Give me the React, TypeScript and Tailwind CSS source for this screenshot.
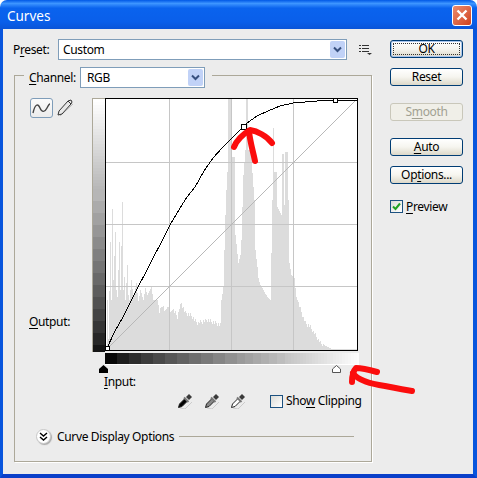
import React from "react";

const keypoints: [number, number][] = [
  [106,349],[107,300],[108,340],[110,242],[111,300],[112,209],[113,280],[115,232],[116,290],[117,297],[119,242],[120,290],[122,202],[123,290],[124,277],[125,300],[127,265],[128,295],[129,300],[131,280],[133,297],[136,283],[138,302],[140,290],[143,300],[145,288],[147,295],[151,287],[153,300],[157,300],[159,312],[162,305],[165,312],[167,305],[170,314],[172,308],[177,317],[179,308],[181,303],[185,313],[190,315],[197,323],[207,320],[215,323],[220,325],[221,300],[223,287],[224,250],[225,215],[226,190],[227,172],[228,99],[231,99],[232,157],[234,157],[235,235],[238,263],[240,255],[241,240],[242,207],[243,175],[245,150],[246,99],[247,99],[248,150],[251,150],[252,173],[254,200],[255,250],[257,267],[258,278],[260,285],[263,290],[267,297],[270,300],[271,253],[272,200],[273,128],[274,172],[276,172],[277,207],[281,215],[282,154],[283,154],[284,205],[285,152],[287,152],[288,200],[289,263],[291,275],[294,278],[296,297],[298,303],[301,312],[305,323],[310,327],[315,335],[320,343],[326,346],[332,349],[357,349],
];

function histPath() {
  let d = "";
  for (let x = 106; x < 357; x++) {
    let k = 0;
    while (k < keypoints.length - 2 && keypoints[k + 1][0] < x) k++;
    const [x0, y0] = keypoints[k];
    const [x1, y1] = keypoints[k + 1];
    let y = y0 + ((y1 - y0) * (x - x0)) / Math.max(1, x1 - x0);
    if (y > 300 && y < 345) y += ((x * 7) % 5) - 2;
    d += `M${x} ${Math.round(y)}V350H${x + 1}V${Math.round(y)}Z`;
  }
  return d;
}

const curve =
  "107,348 115,331 123,317 130,303 138,287 146,272 153,258 162,241 170,225 180,208 187,197 195,187 204,171 213,158 222,148 230,140 237,133 243,127 247,123 257,116 268,111 280,106 293,103 305,102 317,101 335,100 357,100";

const shade = (t: number) => {
  const v = Math.round(8 + 247 * Math.pow(Math.min(1, Math.max(0, t)), 0.8));
  return `rgb(${v},${v},${v})`;
};

function HorizontalRamp() {
  const cells: React.ReactNode[] = [];
  let x = 0;
  while (x < 254) {
    const w = x < 130 ? 12 : x < 180 ? 8 : 3;
    cells.push(<rect key={x} x={x} y={0} width={w} height={11} fill={shade(x / 254)} shapeRendering="crispEdges" />);
    x += w;
  }
  return <svg width={254} height={11} className="block">{cells}</svg>;
}

function VerticalRamp() {
  const cells: React.ReactNode[] = [];
  let y = 0;
  while (y < 253) {
    const h = y < 90 ? 3 : 12;
    cells.push(<rect key={y} x={0} y={y} width={12} height={h} fill={shade(1 - y / 253)} shapeRendering="crispEdges" />);
    y += h;
  }
  return <svg width={12} height={253} className="block">{cells}</svg>;
}

function Ul({ children }: { children: React.ReactNode }) {
  return <span className="underline underline-offset-2">{children}</span>;
}

function Chevron() {
  return (
    <div className="w-[15px] h-[17px] rounded-[2px] bg-[#c1d2f7] flex items-center justify-center shrink-0">
      <svg width="9" height="7" viewBox="0 0 9 7">
        <path d="M1 1.5 L4.5 5 L8 1.5" fill="none" stroke="#37507f" strokeWidth="2" />
      </svg>
    </div>
  );
}

function Btn({ children, mt, focus, disabled }: { children: React.ReactNode; mt: string; focus?: boolean; disabled?: boolean }) {
  const base = "w-[73px] h-[18px] rounded-[3px] border flex items-center justify-center " + mt;
  if (disabled) {
    return (
      <div className={base + " border-[#c9c7ba] bg-[#f0efe8] text-[#a1a192]"}>{children}</div>
    );
  }
  return (
    <div className={base + " border-[#003c74] bg-gradient-to-b from-[#ffffff] via-[#f6f5ef] to-[#dcd8c9] text-[#000] " + (focus ? "shadow-[inset_0_0_0_1px_#a9c6ee]" : "")}>
      {focus ? (
        <div className="w-[67px] h-[12px] border border-dotted border-[#333] flex items-center justify-center">{children}</div>
      ) : (
        children
      )}
    </div>
  );
}

function Dropper({ tip }: { tip: string }) {
  return (
    <svg width="16" height="16" viewBox="0 0 16 16" className="shrink-0">
      <path d="M3 15 L8 16 L15 9" fill="none" stroke="#ccc" strokeWidth="1" />
      <path d="M1.5 14.5 L2.5 11 L8 5.5 L10.5 8 L5 13.5 Z" fill={tip} stroke="#222" strokeWidth="1" />
      <path d="M7 4.5 L11.5 9" stroke="#777" strokeWidth="2" />
      <path d="M9 4 L12 1 L15 4 L12 7 Z" fill="#3a3a3a" />
    </svg>
  );
}

export default function App() {
  return (
    <div className="relative w-[477px] h-[478px] flex flex-col bg-white overflow-hidden font-['Noto_Sans','DejaVu_Sans',sans-serif] text-[12px] tracking-[-0.35px] leading-none text-black">
      <div className="h-[29px] shrink-0 rounded-t-[7px] flex items-center justify-between pl-[7px] pr-[5px] bg-[linear-gradient(180deg,#0058e6_0%,#3d95ff_12%,#0a63ee_28%,#0a5fea_75%,#0a55d8_100%)]">
        <span className="text-white text-[13.5px] tracking-normal mt-[5px]">Curves</span>
        <div className="w-[20px] h-[21px] mt-[1px] rounded-[3px] border border-white bg-gradient-to-br from-[#ec8b6c] to-[#cf3f1a] flex items-center justify-center">
          <svg width="12" height="12" viewBox="0 0 12 12">
            <path d="M1.5 1.5 L10.5 10.5 M10.5 1.5 L1.5 10.5" stroke="#fff" strokeWidth="2.4" />
          </svg>
        </div>
      </div>

      <div className="flex-1 flex bg-[#ececec] border-l-[3px] border-r-[4px] border-b-[4px] border-l-[#0855dd] border-r-[#0855dd] border-b-[#0a3fc9]">
        <div className="w-[369px] shrink-0 pl-[10px] pt-[10px]">
          <div className="flex items-center h-[21px]">
            <span className="w-[45px] mt-[1px]">P<Ul>r</Ul>eset:</span>
            <div className="w-[289px] h-[21px] bg-white border border-[#7f9db9] flex items-center justify-between pl-[4px] pr-[1px]">
              <span className="mt-[1px]">Custom</span>
              <Chevron />
            </div>
            <svg width="13" height="11" viewBox="0 0 13 11" className="ml-[12px]">
              <path d="M0 1.5H2M3 1.5H10M0 4.5H2M3 4.5H10M0 7.5H2M3 7.5H10" stroke="#333" strokeWidth="1" />
              <path d="M8 9H13L10.5 11Z" fill="#333" />
            </svg>
          </div>

          <div className="ml-[1px] mt-[15px] w-[358px] h-[387px] border border-[#aca899] shadow-[1px_1px_0_#fff]">
            <div className="-mt-[9px] ml-[9px] w-[188px] h-[21px] bg-[#ececec] pl-[5px] flex items-center">
              <span className="w-[51px] mt-[1px]"><Ul>C</Ul>hannel:</span>
              <div className="w-[125px] h-[21px] bg-white border border-[#7f9db9] flex items-center justify-between pl-[6px] pr-[1px]">
                <span className="mt-[1px]">RGB</span>
                <Chevron />
              </div>
            </div>

            <div className="mt-[10px] pl-[15px] flex">
              <div className="w-[62px] h-[253px] flex flex-col justify-between">
                <div className="flex items-start">
                  <div className="w-[23px] h-[20px] rounded-[3px] border border-[#7f9db9] bg-gradient-to-b from-[#fbfbfb] to-[#ececec] flex items-center justify-center">
                    <svg width="19" height="14" viewBox="0 0 19 14">
                      <path d="M1 12 C3 3 6 2 8 7 C10 12 13 11 15 7 C16 5 17 3 18 3" fill="none" stroke="#444" strokeWidth="1.4" />
                    </svg>
                  </div>
                  <svg width="17" height="18" viewBox="0 0 17 18" className="ml-[4px] mt-[1px]">
                    <path d="M3 17 L16 5" stroke="#bbb" />
                    <path d="M1 16 L2 12 L11 2 L14 1 L15 3 L14 5 L5 15 Z" fill="#e8e8e8" stroke="#333" strokeWidth="1" />
                    <path d="M11 2 L14 5" stroke="#333" />
                  </svg>
                </div>
                <span className="pb-[23px] -ml-[1px]"><Ul>O</Ul>utput:</span>
              </div>
              <div className="border-l border-t border-[#aca899]">
                <VerticalRamp />
              </div>
              <div className="w-[253px] h-[253px] border border-black bg-white">
                <svg width={251} height={251} viewBox="106 99 251 251" className="block overflow-visible">
                  <path d={histPath()} fill="#dcdcdc" shapeRendering="crispEdges" />
                  <path d="M169.5 99V350M231.5 99V350M293.5 99V350M106 162.5H357M106 224.5H357M106 286.5H357" stroke="#c6c6c6" strokeWidth="1" shapeRendering="crispEdges" />
                  <path d="M107 349L356 100" stroke="#b8b8b8" strokeWidth="1" />
                  <polyline points={curve} fill="none" stroke="#000" strokeWidth="1" shapeRendering="crispEdges" />
                  <rect x="241.5" y="124.5" width="5" height="5" fill="#fff" stroke="#000" shapeRendering="crispEdges" />
                  <rect x="333.5" y="98.5" width="4" height="4" fill="#fff" stroke="#000" shapeRendering="crispEdges" />
                  <rect x="105.5" y="346.5" width="4" height="4" fill="#fff" stroke="#000" shapeRendering="crispEdges" />
                </svg>
              </div>
            </div>

            <div className="ml-[90px] mt-[1px] border-b border-white w-[254px]">
              <HorizontalRamp />
            </div>

            <div className="flex h-[8px]">
              <svg width="9" height="8" viewBox="0 0 9 8" className="ml-[84px]">
                <path d="M4.5 0 L9 4 V8 H0 V4 Z" fill="#000" />
              </svg>
              <svg width="9" height="8" viewBox="0 0 9 8" className="ml-[224px]">
                <path d="M4.5 0.5 L8.5 4 V7.5 H0.5 V4 Z" fill="#fff" stroke="#555" />
              </svg>
            </div>

            <div className="ml-[89px] mt-[2px] h-[14px] flex items-center"><span><Ul>I</Ul>nput:</span></div>

            <div className="ml-[162px] mt-[4px] h-[16px] flex items-center">
              <Dropper tip="#000" />
              <div className="ml-[11px]"><Dropper tip="#888" /></div>
              <div className="ml-[10px]"><Dropper tip="#fff" /></div>
              <div className="ml-[24px] w-[13px] h-[13px] border border-[#1c5180] bg-gradient-to-br from-[#dcdcd7] to-[#fff] shrink-0" />
              <span className="ml-[3px] whitespace-nowrap">Sho<Ul>w</Ul> Clipping</span>
            </div>

            <div className="ml-[21px] mt-[20px] w-[318px] h-[15px] flex items-center">
              <div className="w-[15px] h-[15px] rounded-full bg-white border border-[#c8c8c8] shadow-[1px_1px_1px_#aaa] flex items-center justify-center shrink-0">
                <svg width="9" height="9" viewBox="0 0 9 9">
                  <path d="M1 1 L4.5 4 L8 1 M1 5 L4.5 8 L8 5" fill="none" stroke="#000" strokeWidth="1.4" />
                </svg>
              </div>
              <span className="ml-[6px] whitespace-nowrap">Curve Display Options</span>
              <div className="ml-[5px] flex-1 h-px bg-[#aca899]" />
            </div>
          </div>
        </div>

        <div className="ml-[18px] w-[73px] pt-[11px] flex flex-col">
          <Btn mt="" focus>OK</Btn>
          <Btn mt="mt-[10px]">Reset</Btn>
          <Btn mt="mt-[17px]" disabled>S<Ul>m</Ul>ooth</Btn>
          <Btn mt="mt-[17px]"><Ul>A</Ul>uto</Btn>
          <Btn mt="mt-[10px]">Op<Ul>t</Ul>ions...</Btn>
          <div className="mt-[16px] flex items-center">
            <div className="w-[13px] h-[13px] border border-[#1c5180] bg-gradient-to-br from-[#dcdcd7] to-[#fff] flex items-center justify-center shrink-0">
              <svg width="9" height="9" viewBox="0 0 9 9">
                <path d="M1 4.5 L3.5 7 L8 1.5" fill="none" stroke="#21a121" strokeWidth="2" />
              </svg>
            </div>
            <span className="ml-[3px]"><Ul>P</Ul>review</span>
          </div>
        </div>
      </div>

      <svg width={477} height={478} className="absolute left-0 top-0 pointer-events-none">
        <g fill="none" stroke="#fb0d0d" strokeWidth="6" strokeLinecap="round" strokeLinejoin="round">
          <path d="M234 147 C236 141 243 134 250 130 C257 131 267 136 272 143" />
          <path d="M249 131 C250 142 253 151 255 161" />
          <path d="M377 372 C370 370 362 368 356 368 C352 372 352 378 352 382" />
          <path d="M353 373 C358 381 372 384 385 386 C395 388 405 390 412 391" />
        </g>
      </svg>
    </div>
  );
}
